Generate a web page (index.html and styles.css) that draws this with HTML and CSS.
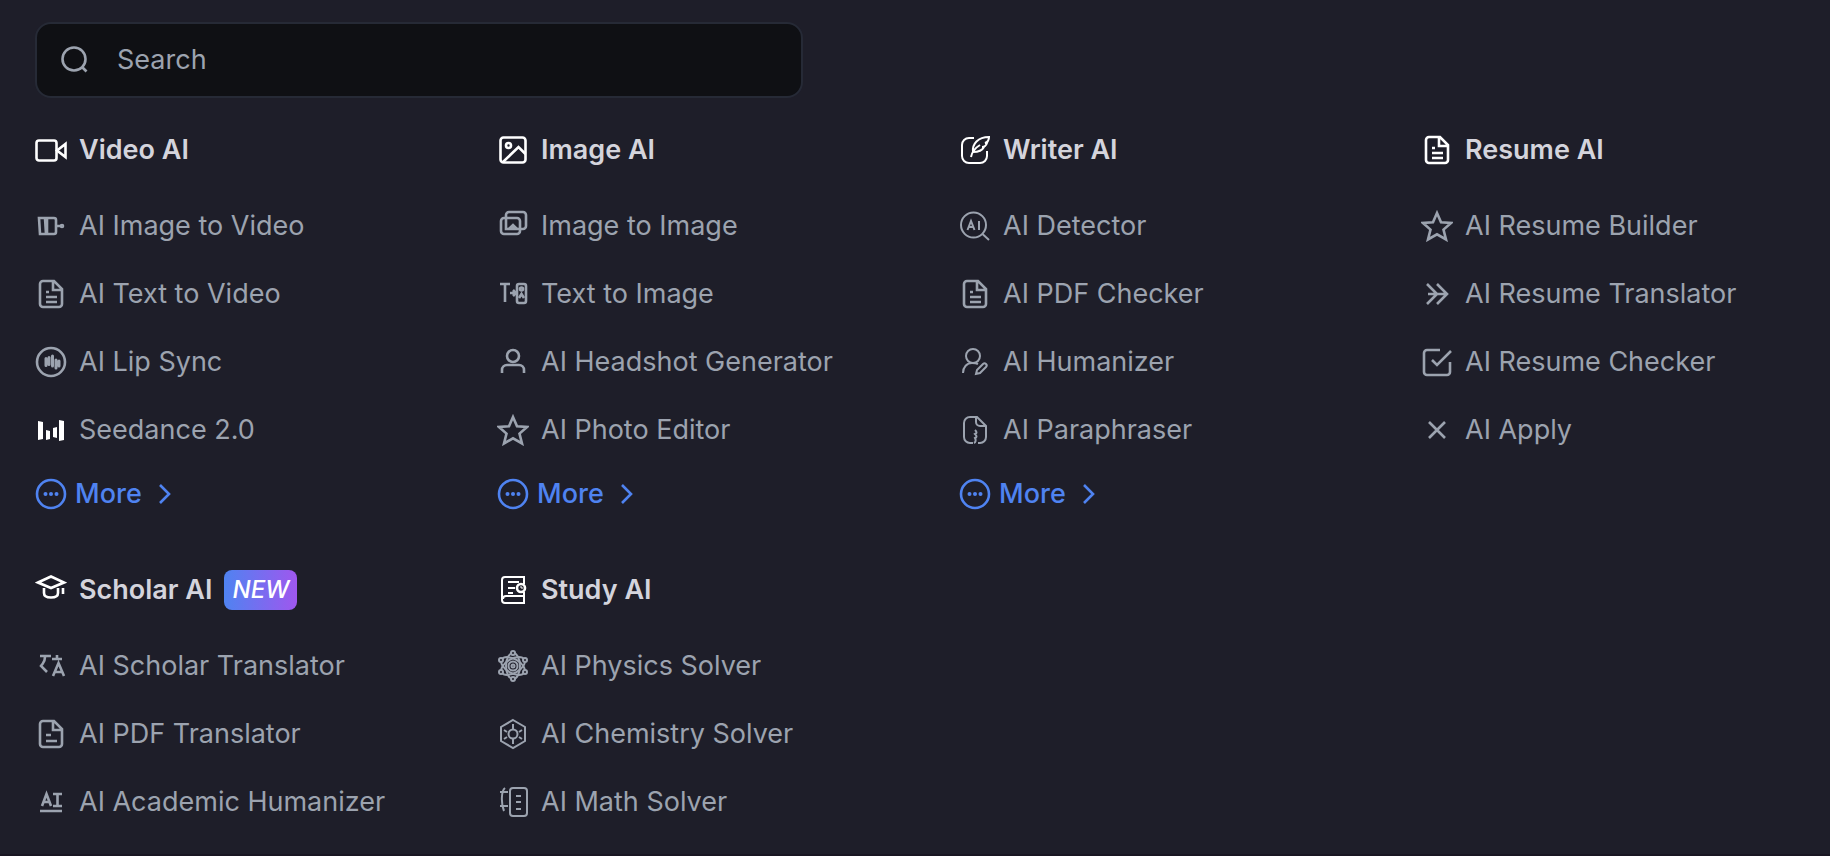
FILE: index.html
```html
<!DOCTYPE html>
<html lang="en">
<head>
  <meta charset="UTF-8" />
  <meta name="viewport" content="width=device-width, initial-scale=1.0" />
  <title>AI Tools</title>
  <link rel="stylesheet" href="styles.css">
</head>
<body>
  <!-- shared icons -->
  <svg class="sprite" aria-hidden="true">
    <symbol id="doc" viewBox="0 0 32 32">
      <path d="M8 3h11l8 8v15a3 3 0 0 1-3 3H8a3 3 0 0 1-3-3V6a3 3 0 0 1 3-3zM18 3v9h9M11 19h11M11 24h11M11 14h3" />
    </symbol>
    <symbol id="star" viewBox="0 0 32 32">
      <path d="M16 3l4 9.200 10 .8-7.500 6.600 2.500 9.900-9-5.200-9 5.200 2.500-9.900L2 13l10-.8z" />
    </symbol>
    <symbol id="dots" viewBox="0 0 32 32">
      <circle cx="16" cy="16" r="14" />
      <g fill="currentColor" stroke="none"><circle cx="10.500" cy="16" r="2" /><circle cx="16" cy="16" r="2" /><circle cx="21.500" cy="16" r="2" /></g>
    </symbol>
    <symbol id="chevron" viewBox="0 0 14 20">
      <path d="M2 1l9 9-9 9" />
    </symbol>
  </svg>

  <main class="menu">
    <label class="search">
      <svg class="icon" viewBox="0 0 32 32"><circle cx="15" cy="15" r="11.500" /><path d="M23.500 23.500l4 4" /></svg>
      <input type="search" placeholder="Search" aria-label="Search" />
    </label>

    <div class="columns">
      <section class="group">
        <h2>
          <svg class="icon" viewBox="0 0 32 32"><rect x="1.500" y="6.500" width="20" height="20" rx="2.500" /><path d="M22 16.500l8.500-6.500v13z" /></svg>
          Video AI
        </h2>
        <ul>
          <li><a href="#">
            <svg class="icon" viewBox="0 0 32 32"><path d="M4 8h6l1 16H5zM12 8h7a2 2 0 0 1 2 2v12a2 2 0 0 1-2 2h-7zM22 16h5" /><circle cx="27" cy="16" r="1" /></svg>
            AI Image to Video
          </a></li>
          <li><a href="#"><svg class="icon"><use href="#doc" /></svg>AI Text to Video</a></li>
          <li><a href="#">
            <svg class="icon" viewBox="0 0 32 32"><circle cx="16" cy="16" r="14" /><path d="M11 12.500v7M14 11.500v7M17.500 10v10M21 14v8M24 15v5" stroke-width="3" stroke-linecap="round" /></svg>
            AI Lip Sync
          </a></li>
          <li><a href="#">
            <svg class="icon bars" viewBox="0 0 32 32"><path d="M3 7l5 1v17l-5 1zM11 16l4 1v8l-4 1zM18 14l4-1v11l-4-1zM24 6l5 1v19l-5 1z" /></svg>
            Seedance 2.0
          </a></li>
        </ul>
        <a class="more" href="#"><svg class="icon"><use href="#dots" /></svg>More<svg class="chevron"><use href="#chevron" /></svg></a>
      </section>

      <section class="group">
        <h2>
          <svg class="icon" viewBox="0 0 32 32"><rect x="3.500" y="3.500" width="25" height="25" rx="3" /><circle cx="11.500" cy="11.500" r="2.500" /><path d="M6 28l15.500-15 7 7" /></svg>
          Image AI
        </h2>
        <ul>
          <li><a href="#">
            <svg class="icon" viewBox="0 0 32 32"><path d="M9 8V5a3 3 0 0 1 3-3h14a3 3 0 0 1 3 3v11a3 3 0 0 1-3 3H9z" /><rect x="4" y="8" width="19" height="16" rx="3" /><path d="M13 18l3-3 3 3z" fill="currentColor" /></svg>
            Image to Image
          </a></li>
          <li><a href="#">
            <svg class="icon" viewBox="0 0 32 32"><path d="M3 6h10M8 6v18M13 15h6M16 12l3 3-3 3" /><rect x="20" y="6" width="9" height="19" rx="2" /><path d="M22 20l2.500-4 2.500 4" /><circle cx="24.500" cy="11" r="1.500" /></svg>
            Text to Image
          </a></li>
          <li><a href="#">
            <svg class="icon" viewBox="0 0 32 32"><circle cx="16" cy="10" r="6" /><path d="M5 27v-3a5 5 0 0 1 5-5h12a5 5 0 0 1 5 5v3" /></svg>
            AI Headshot Generator
          </a></li>
          <li><a href="#"><svg class="icon"><use href="#star" /></svg>AI Photo Editor</a></li>
        </ul>
        <a class="more" href="#"><svg class="icon"><use href="#dots" /></svg>More<svg class="chevron"><use href="#chevron" /></svg></a>
      </section>

      <section class="group">
        <h2>
          <svg class="icon" viewBox="0 0 32 32"><path d="M15 4h-5a7 7 0 0 0-7 7v11a7 7 0 0 0 7 7h11a7 7 0 0 0 7-7v-5M12 23c1-5 4-9 9-12M14 18c-1-8 5-15 16-15 0 3-1 5-4 6h2c-1 3-3 4-5 4h2c-2 4-6 5-11 5" stroke-width="2" /></svg>
          Writer AI
        </h2>
        <ul>
          <li><a href="#">
            <svg class="icon thin" viewBox="0 0 32 32"><circle cx="14.500" cy="15" r="12.500" /><path d="M23.500 24l6.500 6M8.500 20l3.500-9 3.500 9M10 17h4M20 11v9" /></svg>
            AI Detector
          </a></li>
          <li><a href="#"><svg class="icon"><use href="#doc" /></svg>AI PDF Checker</a></li>
          <li><a href="#">
            <svg class="icon thin" viewBox="0 0 32 32"><circle cx="14" cy="10" r="7" /><path d="M4 27c0-6 4-10 9-10 2 0 4 0 6 1M17 28l1-4 6-6c2-2 5 1 3 3l-6 6z" /></svg>
            AI Humanizer
          </a></li>
          <li><a href="#">
            <svg class="icon thin" viewBox="0 0 32 32"><path d="M14 29h-3a6 6 0 0 1-6-6V9a6 6 0 0 1 6-6h7l9 9v11a6 6 0 0 1-6 6h-2M17 3v5a4 4 0 0 0 4 4h6M16 16c2 2 2 3 0 4 2 2 2 3 0 4 1 2 1 4-1 5" /></svg>
            AI Paraphraser
          </a></li>
        </ul>
        <a class="more" href="#"><svg class="icon"><use href="#dots" /></svg>More<svg class="chevron"><use href="#chevron" /></svg></a>
      </section>

      <section class="group">
        <h2><svg class="icon"><use href="#doc" /></svg>Resume AI</h2>
        <ul>
          <li><a href="#"><svg class="icon"><use href="#star" /></svg>AI Resume Builder</a></li>
          <li><a href="#">
            <svg class="icon" viewBox="0 0 32 32"><path d="M6 6l10 10L6 26M16 6l10 10-10 10M7 16h19" /></svg>
            AI Resume Translator
          </a></li>
          <li><a href="#">
            <svg class="icon" viewBox="0 0 32 32"><path d="M19 4H6a3 3 0 0 0-3 3v19a3 3 0 0 0 3 3h20a3 3 0 0 0 3-3V16M11 14l5 5L30 5" /></svg>
            AI Resume Checker
          </a></li>
          <li><a href="#">
            <svg class="icon" viewBox="0 0 32 32"><path d="M8 8l16 16M24 8L8 24" /></svg>
            AI Apply
          </a></li>
        </ul>
      </section>

      <section class="group">
        <h2>
          <svg class="icon" viewBox="0 0 32 32"><path d="M3 8.500L16 2.500l13 6-13 5.500zM9 14v5c0 3 2 4.500 7 4.500s7-1.500 7-4.500v-5M28 14v6" /></svg>
          Scholar AI <span class="badge">NEW</span>
        </h2>
        <ul>
          <li><a href="#">
            <svg class="icon" viewBox="0 0 32 32"><path d="M5 6h11M10 7c0 5-1 5-4 9l6 6M17 9h10M22 5v4M18 26l5.500-13L29 26M20 22h7" /></svg>
            AI Scholar Translator
          </a></li>
          <li><a href="#">
            <svg class="icon" viewBox="0 0 32 32"><path d="M8 3h11l8 8v15a3 3 0 0 1-3 3H8a3 3 0 0 1-3-3V6a3 3 0 0 1 3-3zM18 3v9h9M11 17h5M11 23h11" /></svg>
            AI PDF Translator
          </a></li>
          <li><a href="#">
            <svg class="icon" viewBox="0 0 32 32"><path d="M7 20l4.500-12L16 20M9 16h5M18 8h9M22.500 8v12M18 20h9M5 25h22" /></svg>
            AI Academic Humanizer
          </a></li>
        </ul>
      </section>

      <section class="group">
        <h2>
          <svg class="icon" viewBox="0 0 32 32"><path d="M27 10V3H8a3 3 0 0 0-3 3v20a3 3 0 0 0 3 3h19V18M27 22H9a3 3 0 0 0-3 3M11 8h11M11 14h7M11 19h5" stroke-width="2" /><circle cx="24" cy="14" r="4" /><path d="M24 12v2h2" stroke-width="1" /></svg>
          Study AI
        </h2>
        <ul>
          <li><a href="#">
            <svg class="icon thin" viewBox="0 0 32 32"><circle cx="16" cy="16" r="1.500" /><circle cx="16" cy="16" r="4.500" /><ellipse cx="16" cy="16" rx="7" ry="13" /><ellipse cx="16" cy="16" rx="7" ry="13" transform="rotate(60 16 16)" /><ellipse cx="16" cy="16" rx="7" ry="13" transform="rotate(120 16 16)" /><g fill="#1e1e29"><circle cx="16" cy="3" r="2" /><circle cx="16" cy="29" r="2" /><circle cx="4" cy="10" r="2" /><circle cx="28" cy="10" r="2" /><circle cx="4" cy="22" r="2" /><circle cx="28" cy="22" r="2" /></g></svg>
            AI Physics Solver
          </a></li>
          <li><a href="#">
            <svg class="icon thin" viewBox="0 0 32 32"><path d="M16 2l12 7v14l-12 7-12-7V9zM16 6v5M16 21v5M7 12l3 2M25 12l-3 2M7 21l3-2M25 21l-3-2" /><circle cx="16" cy="16" r="4.500" /></svg>
            AI Chemistry Solver
          </a></li>
          <li><a href="#">
            <svg class="icon thin" viewBox="0 0 32 32"><rect x="13" y="2" width="17" height="28" rx="3" /><path d="M19 10h5M19 16h5M19 23h5M8 2C4 5 4 18 7 25M3 6h8M3 20h8" /></svg>
            AI Math Solver
          </a></li>
        </ul>
      </section>
    </div>
  </main>
</body>
</html>
```

FILE: styles.css
```css
* {
  box-sizing: border-box;
}
body {
  margin: 0;
  font-family: Inter, "Liberation Sans", sans-serif;
  font-size: 27px;
  line-height: 40px;
  background: #1e1e29;
  color: #9ca3af;
}
.sprite {
  display: none;
}
.menu {
  padding: 22px 35px 18px;
  border-bottom: 2px solid #191622;
}
.icon {
  flex: none;
  width: 32px;
  height: 32px;
}
.icon,
.chevron {
  fill: none;
  stroke: currentColor;
  stroke-width: 2.6;
}
.thin {
  stroke-width: 2;
}
.bars {
  fill: #fff;
  stroke: none;
}
.search {
  display: flex;
  align-items: center;
  gap: 26px;
  max-width: 768px;
  height: 76px;
  padding: 0 22px;
  background: #0f1014;
  border: 2px solid #262a36;
  border-radius: 16px;
  color: #9ca3af;
}
.search input {
  flex: 1;
  min-width: 0;
  padding: 0;
  border: none;
  outline: none;
  background: none;
  font: inherit;
  color: #e5e7eb;
}
.search input::placeholder {
  color: #9ca3af;
  opacity: 1;
}
.columns {
  display: grid;
  grid-template-columns: repeat(4, 1fr);
  gap: 40px 88px;
  padding-top: 32px;
}
h2 {
  display: flex;
  align-items: center;
  gap: 12px;
  margin: 0 0 22px;
  font-size: 27px;
  font-weight: 600;
  color: #d4d4dc;
}
h2 .icon {
  color: #fff;
}
ul {
  margin: 0;
  padding: 0;
  list-style: none;
}
a {
  color: inherit;
  text-decoration: none;
}
li a {
  display: flex;
  align-items: center;
  gap: 12px;
  padding: 14px 0;
  white-space: nowrap;
}
li a:hover {
  color: #fff;
}
.more {
  display: flex;
  align-items: center;
  gap: 8px;
  padding: 10px 0 16px;
  font-weight: 500;
  color: #4f83f1;
}
.chevron {
  width: 14px;
  height: 20px;
  margin-left: 8px;
}
.badge {
  padding: 0 8px;
  border-radius: 8px;
  background: linear-gradient(to right, #4f83f1, #9f57ee);
  font-size: 24px;
  font-weight: 500;
  font-style: italic;
  color: #fff;
}
```
